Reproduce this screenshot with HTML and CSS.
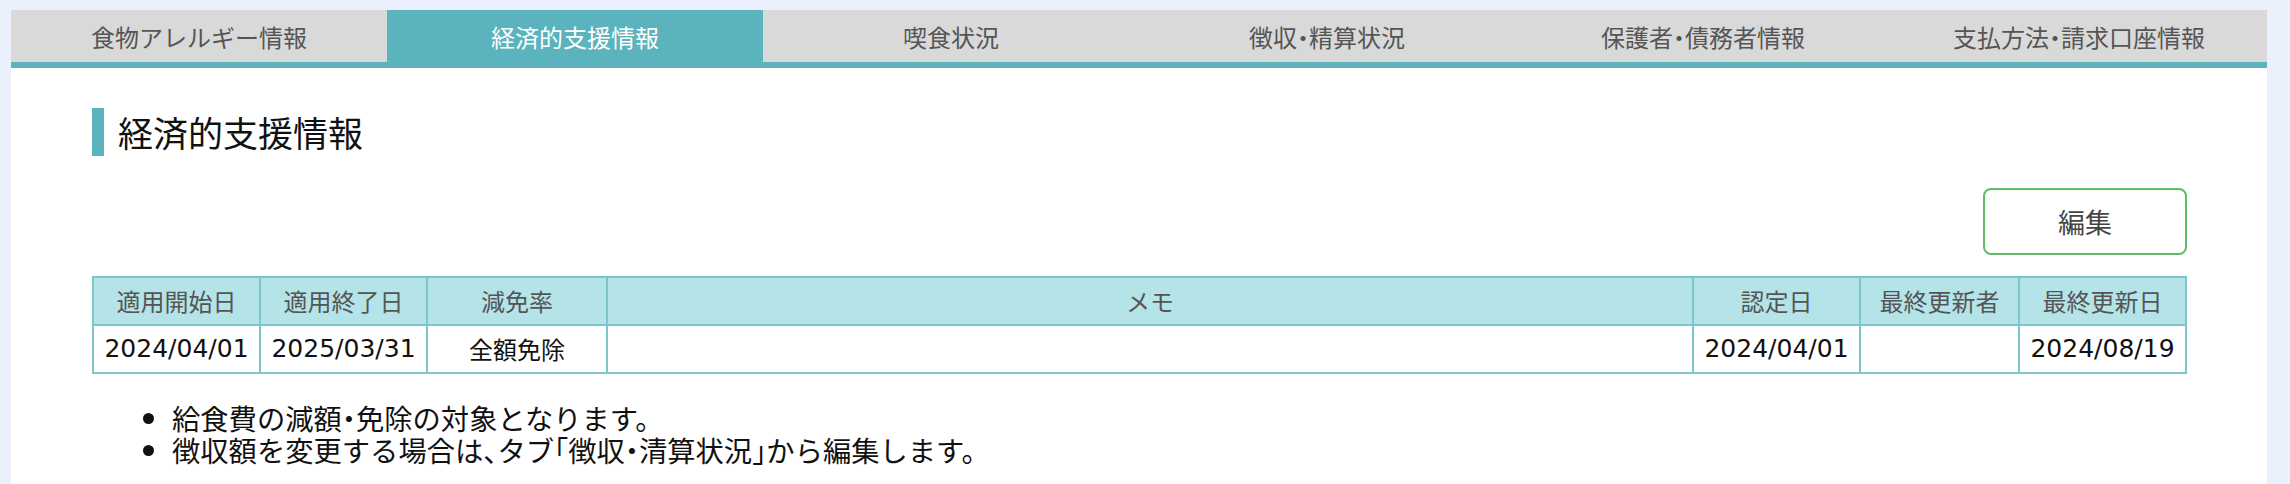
FILE: index.html
```html
<!DOCTYPE html>
<html lang="ja">
<head>
    <meta charset="UTF-8">
    <title>経済的支援情報</title>
    <link rel="stylesheet" href="styles.css">
</head>
<body>
    <div class="page">
        <nav class="tabs">
            <div class="tab">食物アレルギー情報</div>
            <div class="tab active">経済的支援情報</div>
            <div class="tab">喫食状況</div>
            <div class="tab">徴収<span class="p">・</span>精算状況</div>
            <div class="tab">保護者<span class="p">・</span>債務者情報</div>
            <div class="tab">支払方法<span class="p">・</span>請求口座情報</div>
        </nav>

        <section class="panel">
            <h2 class="section-title">経済的支援情報</h2>

            <div class="actions">
                <button class="edit-button">編集</button>
            </div>

            <table class="support-table">
                <colgroup>
                    <col class="col-date">
                    <col class="col-date">
                    <col class="col-rate">
                    <col>
                    <col class="col-date">
                    <col class="col-user">
                    <col class="col-date">
                </colgroup>
                <thead>
                    <tr>
                        <th>適用開始日</th>
                        <th>適用終了日</th>
                        <th>減免率</th>
                        <th>メモ</th>
                        <th>認定日</th>
                        <th>最終更新者</th>
                        <th>最終更新日</th>
                    </tr>
                </thead>
                <tbody>
                    <tr>
                        <td class="num">2024/04/01</td>
                        <td class="num">2025/03/31</td>
                        <td>全額免除</td>
                        <td></td>
                        <td class="num">2024/04/01</td>
                        <td></td>
                        <td class="num">2024/08/19</td>
                    </tr>
                </tbody>
            </table>

            <ul class="notes">
                <li>給食費の減額<span class="p">・</span>免除の対象となります。</li>
                <li>徴収額を変更する場合は<span class="p">、</span>タブ<span class="p">「</span>徴収<span class="p">・</span>清算状況<span class="p">」</span>から編集します。</li>
            </ul>
        </section>
    </div>
</body>
</html>
```

FILE: styles.css
```css
html, body {
    height: 100%;
}
body {
    margin: 0;
    background-color: #eaf1fd;
    font-family: "Noto Sans CJK JP", "Noto Sans", sans-serif;
    color: #111;
    overflow: hidden;
}
.page {
    display: flex;
    flex-direction: column;
    height: calc(100% - 10px);
    margin: 10px 23px 0 11px;
}

/* 約物を半角幅に詰める */
.p {
    font-feature-settings: "halt";
}

/* タブ */
.tabs {
    display: grid;
    grid-template-columns: repeat(6, 1fr);
    background-color: #d9d9d9;
    border-bottom: 6px solid #5bb4bd;
}
.tab {
    height: 52px;
    display: flex;
    align-items: center;
    justify-content: center;
    font-size: 24px;
    color: #555;
}
.tab.active {
    background-color: #5bb4bd;
    color: #fff;
}

/* 本体 */
.panel {
    flex: 1;
    background-color: #fff;
    padding: 40px 80px 0 81px;
}
.section-title {
    margin: 0;
    border-left: 12px solid #5bb4bd;
    padding-left: 14px;
    height: 48px;
    line-height: 48px;
    font-size: 35px;
    font-weight: normal;
    color: #111;
}
.actions {
    display: flex;
    justify-content: flex-end;
    margin-top: 32px;
}
.edit-button {
    width: 204px;
    height: 67px;
    background-color: #fff;
    border: 2px solid #5cbf67;
    border-radius: 8px;
    font-family: inherit;
    font-size: 27px;
    color: #444;
    cursor: pointer;
}

/* テーブル */
.support-table {
    width: 100%;
    margin-top: 21px;
    border-collapse: collapse;
    table-layout: fixed;
    border: 2px solid #7cc6c9;
}
.col-date { width: 167px; }
.col-rate { width: 180px; }
.col-user { width: 159px; }
.support-table th,
.support-table td {
    border: 2px solid #7cc6c9;
    height: 46px;
    padding: 0 6px;
    text-align: center;
    font-size: 24px;
    line-height: 30px;
    font-weight: normal;
    white-space: nowrap;
}
.support-table th {
    background-color: #b4e4e8;
    color: #555;
}
.support-table td.num {
    font-family: "DejaVu Sans", "Noto Sans CJK JP", sans-serif;
    font-size: 25px;
}

/* 注記 */
.notes {
    margin: 28px 0 0;
    padding-left: 80px;
    font-size: 28.3px;
    line-height: 32px;
}
```
